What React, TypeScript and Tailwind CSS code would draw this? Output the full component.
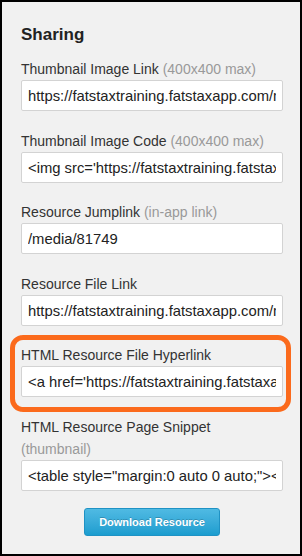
const fields = [
  {
    label: "Thumbnail Image Link",
    hint: "(400x400 max)",
    value: "https://fatstaxtraining.fatstaxapp.com/media/81749/thumbnail",
    gap: "mb-[19px]",
  },
  {
    label: "Thumbnail Image Code",
    hint: "(400x400 max)",
    value: "<img src='https://fatstaxtraining.fatstaxapp.com/media/81749/thumbnail' />",
    gap: "mb-[18px]",
  },
  {
    label: "Resource Jumplink",
    hint: "(in-app link)",
    value: "/media/81749",
    gap: "mb-[19px]",
  },
  {
    label: "Resource File Link",
    hint: "",
    value: "https://fatstaxtraining.fatstaxapp.com/media/81749/file",
    gap: "mb-[18px]",
  },
];

const Field = ({ label, hint, value }: { label: string; hint: string; value: string }) => (
  <>
    <label className="block text-[14px] leading-[22px] text-[#333]">
      {label} {hint && <span className="text-[#999]">{hint}</span>}
    </label>
    <input
      readOnly
      value={value}
      className="block w-full h-[31px] bg-white border border-[#d3d3d3] rounded-[2px] px-[6px] text-[14.8px] text-[#222] outline-none"
    />
  </>
);

const App = () => {
  return (
    <div
      className="w-[302px] h-[556px] border-2 border-black bg-[#f1f1f1] pl-[19px] pr-[17px] pt-[21px] overflow-hidden"
      style={{ fontFamily: '"Liberation Sans", Arial, sans-serif' }}
    >
      <h2 className="text-[17px] leading-[24px] font-bold text-[#222] mb-[11px]">Sharing</h2>

      {fields.map((f) => (
        <div key={f.label} className={f.gap}>
          <Field label={f.label} hint={f.hint} value={f.value} />
        </div>
      ))}

      <div className="relative mb-[19px]">
        <Field
          label="HTML Resource File Hyperlink"
          hint=""
          value="<a href='https://fatstaxtraining.fatstaxapp.com/media/81749/file'>Resource</a>"
        />
        {/* highlight drawn over the field */}
        <div className="absolute top-[-9px] left-[-11px] right-[-8px] bottom-[-15px] border-[5px] border-[#fb6a1c] rounded-[13px] pointer-events-none" />
      </div>

      <div>
        <Field
          label="HTML Resource Page Snippet"
          hint="(thumbnail)"
          value={'<table style="margin:0 auto 0 auto;"><tr><td>'}
        />
      </div>

      <div className="flex justify-center mt-[17px]">
        <button className="h-[28px] w-[136px] rounded-[3px] border border-[#1f92c4] bg-linear-to-b from-[#4fbae3] to-[#1a9dcf] text-white text-[11px] font-bold [text-shadow:0_-1px_0_rgba(0,0,0,0.2)]">
          Download Resource
        </button>
      </div>
    </div>
  );
};

export default App;
